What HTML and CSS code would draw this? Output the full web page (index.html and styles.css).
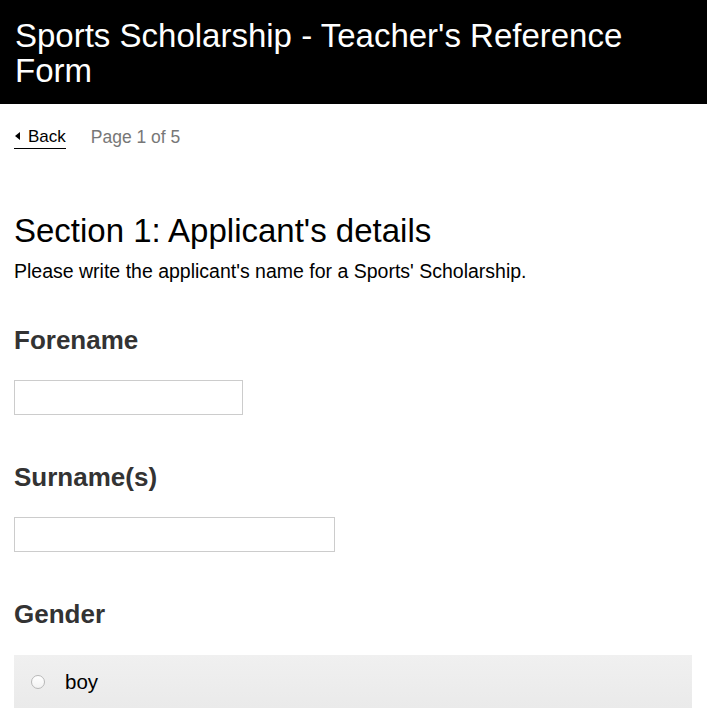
FILE: index.html
```html
<!DOCTYPE html>
<html lang="en">
<head>
<meta charset="utf-8">
<title>Sports Scholarship - Teacher's Reference Form</title>
<link rel="stylesheet" href="styles.css">
</head>
<body>
<header class="site-header">
  <h1 class="site-title">Sports Scholarship - Teacher's Reference Form</h1>
</header>
<main class="page">
  <nav class="pager">
    <a class="back-link" href="#"><span class="back-arrow"></span>Back</a>
    <span class="page-count">Page 1 of 5</span>
  </nav>
  <section class="section">
    <h2 class="section-title">Section 1: Applicant's details</h2>
    <p class="section-intro">Please write the applicant's name for a Sports' Scholarship.</p>

    <div class="field">
      <label class="field-label" for="forename">Forename</label>
      <input class="text-input input-short" id="forename" type="text">
    </div>

    <div class="field">
      <label class="field-label" for="surname">Surname(s)</label>
      <input class="text-input input-medium" id="surname" type="text">
    </div>

    <fieldset class="field radio-field">
      <legend class="field-label">Gender</legend>
      <label class="radio-option">
        <span class="radio-circle"></span>
        <span class="radio-text">boy</span>
      </label>
    </fieldset>
  </section>
</main>
</body>
</html>
```
FILE: styles.css
```css
html, body {
  margin: 0;
  padding: 0;
  background: #fff;
}
body {
  font-family: "Liberation Sans", Arial, Helvetica, sans-serif;
  color: #000;
}
.site-header {
  background: #000;
  padding: 18px 15px 16px;
}
.site-title {
  margin: 0;
  color: #fff;
  font-weight: normal;
  font-size: 33px;
  line-height: 35px;
}
.page {
  padding: 0 14px;
}
.pager {
  display: flex;
  align-items: center;
  gap: 25px;
  padding-top: 22px;
  height: 24px;
}
.back-link {
  display: inline-flex;
  align-items: center;
  color: #000;
  text-decoration: none;
  font-size: 17px;
  line-height: 20px;
  border-bottom: 1px solid #000;
  padding-bottom: 1px;
}
.back-arrow {
  width: 0;
  height: 0;
  border-top: 4px solid transparent;
  border-bottom: 4px solid transparent;
  border-right: 5px solid #000;
  margin: 0 8px 2px 1px;
}
.page-count {
  color: #777;
  font-size: 17.5px;
  line-height: 20px;
  padding-bottom: 2px;
}
.section {
  padding-top: 63px;
}
.section-title {
  margin: 0;
  font-weight: normal;
  font-size: 33px;
  line-height: 36px;
  color: #000;
}
.section-intro {
  margin: 11px 0 0;
  font-size: 19.5px;
  line-height: 22px;
}
.field {
  margin: 45px 0 0;
  padding: 0;
  border: 0;
  display: flex;
  flex-direction: column;
  align-items: flex-start;
}
.field + .field {
  margin-top: 49px;
}
.field-label {
  padding: 0;
  font-weight: bold;
  font-size: 26px;
  line-height: 26px;
  color: #333;
  margin-bottom: 27px;
}
.text-input {
  box-sizing: border-box;
  height: 35px;
  border: 1px solid #ccc;
  margin: 0;
  padding: 4px 6px;
  font-size: 18px;
  background: #fff;
}
.input-short { width: 229px; }
.input-medium { width: 321px; }
.radio-field {
  display: block;
  margin-right: 1px;
}
.radio-field .field-label {
  float: left;
  width: 100%;
  margin-bottom: 28px;
}
.radio-option {
  clear: both;
  box-sizing: border-box;
  display: flex;
  align-items: center;
  height: 53px;
  padding-left: 17px;
  background: linear-gradient(#f0f0f0, #eaeaea);
  font-size: 20.5px;
}
.radio-circle {
  box-sizing: border-box;
  width: 14px;
  height: 14px;
  border: 1px solid #b8b8b8;
  border-radius: 50%;
  background: linear-gradient(#fff, #f2f2f2);
  margin-right: 20px;
}
.radio-text {
  color: #000;
}
```
